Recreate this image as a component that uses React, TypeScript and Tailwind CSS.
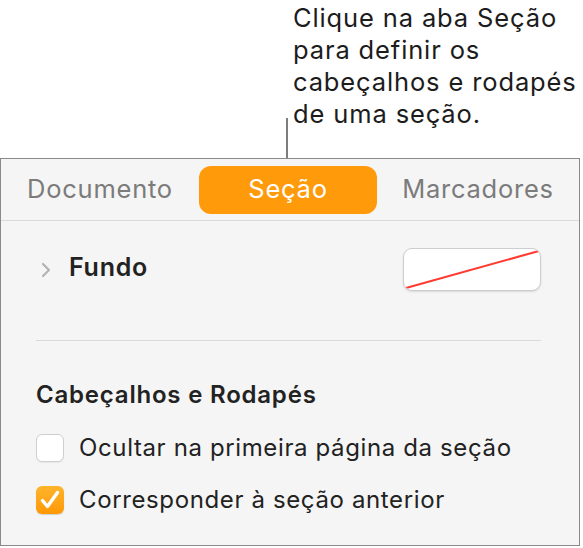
const font = { fontFamily: "Inter, 'Noto Sans', sans-serif" };

function Checkbox({ checked }: { checked?: boolean }) {
  if (checked) {
    return (
      <span className="flex h-[28px] w-[28px] shrink-0 items-center justify-center rounded-[6px] bg-gradient-to-b from-[#ffb42a] to-[#ff9800] shadow-[0_1px_1px_rgba(0,0,0,0.15)]">
        <svg viewBox="0 0 28 28" className="h-[28px] w-[28px]" fill="none">
          <path
            d="M6.5 14.5 L11.5 20.5 L21.5 6.5"
            stroke="white"
            strokeWidth="3.4"
            strokeLinecap="round"
            strokeLinejoin="round"
          />
        </svg>
      </span>
    );
  }
  return (
    <span className="h-[28px] w-[28px] shrink-0 rounded-[6px] border border-[#cfcfcf] bg-white shadow-[0_1px_1px_rgba(0,0,0,0.06)]" />
  );
}

export default function App() {
  return (
    <div className="h-[548px] w-[583px] overflow-hidden bg-white" style={font}>
      {/* callout */}
      <div className="pl-[293px] pt-[2px] text-[25.5px] leading-[32px] tracking-[0.034em] text-[#1c1c1c]">
        <p>Clique na aba Seção</p>
        <p>para definir os</p>
        <p>cabeçalhos e rodapés</p>
        <p>de uma seção.</p>
      </div>
      <div className="-mt-[12px] ml-[286px] h-[40px] w-[1.5px] bg-[#7d7d7d]" />

      {/* panel */}
      <div className="h-[388px] w-[580px] border-[1.5px] border-[#8a8a8a] bg-[#f5f5f5]">
        <div className="flex h-[62px] items-center gap-[12px] border-b border-[#dadada] px-[8px] text-[25.5px] tracking-[0.03em]">
          <div className="w-[178px] pl-[4px] text-center text-[#7b7b7b]">Documento</div>
          <div className="flex h-[48px] w-[178px] items-center justify-center rounded-[12px] bg-[#ff9a0a] text-white">
            Seção
          </div>
          <div className="w-[178px] text-center text-[#7b7b7b]">Marcadores</div>
        </div>

        <div className="pl-[35px] pr-[38px] pt-[27px]">
          <div className="flex h-[43px] items-center">
            <svg viewBox="0 0 10 16" className="ml-[5px] h-[16px] w-[10px]" fill="none">
              <path
                d="M2 2 L8 8 L2 14"
                stroke="#b3b3b3"
                strokeWidth="2.2"
                strokeLinecap="round"
                strokeLinejoin="round"
              />
            </svg>
            <span className="mb-[4px] ml-[18px] text-[25px] font-semibold tracking-[0.03em] text-[#222]">Fundo</span>
            <div className="ml-auto h-[43px] w-[138px] overflow-hidden rounded-[9px] border border-[#cdcdcd] bg-white shadow-[0_1px_2px_rgba(0,0,0,0.12)]">
              <svg viewBox="0 0 138 43" preserveAspectRatio="none" className="h-full w-full">
                <line x1="2" y1="41" x2="137" y2="2" stroke="#ff3b30" strokeWidth="2.2" />
              </svg>
            </div>
          </div>

          <div className="mt-[49px] h-px bg-[#dadada]" />

          <p className="mt-[40px] text-[24px] font-semibold leading-[28px] tracking-[0.033em] text-[#222]">
            Cabeçalhos e Rodapés
          </p>

          <div className="mt-[25px] flex flex-col gap-[24px] text-[24px] leading-[28px] tracking-[0.026em] text-[#222]">
            <label className="flex items-center gap-[15px]">
              <Checkbox />
              <span>Ocultar na primeira página da seção</span>
            </label>
            <label className="flex items-center gap-[15px]">
              <Checkbox checked />
              <span>Corresponder à seção anterior</span>
            </label>
          </div>
        </div>
      </div>
    </div>
  );
}
